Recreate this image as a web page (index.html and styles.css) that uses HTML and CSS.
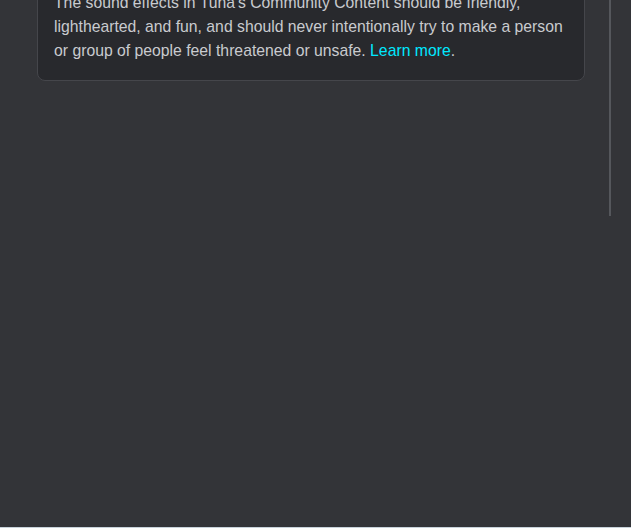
FILE: index.html
```html
<!DOCTYPE html>
<html lang="en">
<head>
    <meta charset="UTF-8">
    <meta name="viewport" content="width=device-width, initial-scale=1.0">
    <title>Community Content</title>
    <link rel="stylesheet" href="styles.css">
</head>
<body>
<div class="scroller">
    <div class="content">
        <div class="notice">
            <p>The sound effects in Tuna's Community Content should be friendly,
            lighthearted, and fun, and should never intentionally try to make a person
            or group of people feel threatened or unsafe. <a href="#" class="link">Learn more</a>.</p>
        </div>
    </div>
    <div class="track"><div class="thumb"></div></div>
</div>
<div class="edge"></div>
</body>
</html>
```

FILE: styles.css
```css
html, body {
  margin: 0;
  padding: 0;
  background: #313338;
}

body {
  height: 528px;
  overflow: hidden;
  font-family: "Liberation Sans", Arial, sans-serif;
  display: flex;
  flex-direction: column;
}

.scroller {
  flex: 1;
  display: flex;
  background: #333438;
}

.content {
  flex: 1;
  padding: 0 24px 0 37px;
}

.notice {
  margin-top: -26px;
  background: #28292d;
  border: 1px solid #45464b;
  border-radius: 8px;
  padding: 16px 16px 17px 16px;
}

.notice p {
  margin: 0;
  color: #c9cbcf;
  font-size: 15.75px;
  line-height: 24px;
}

.link {
  color: #00e8ff;
  text-decoration: none;
  font-weight: 500;
}

.track {
  width: 22px;
}

.thumb {
  width: 2px;
  height: 216px;
  background: #55575c;
}

.edge {
  height: 1px;
  background: #c8d2da;
}
```
